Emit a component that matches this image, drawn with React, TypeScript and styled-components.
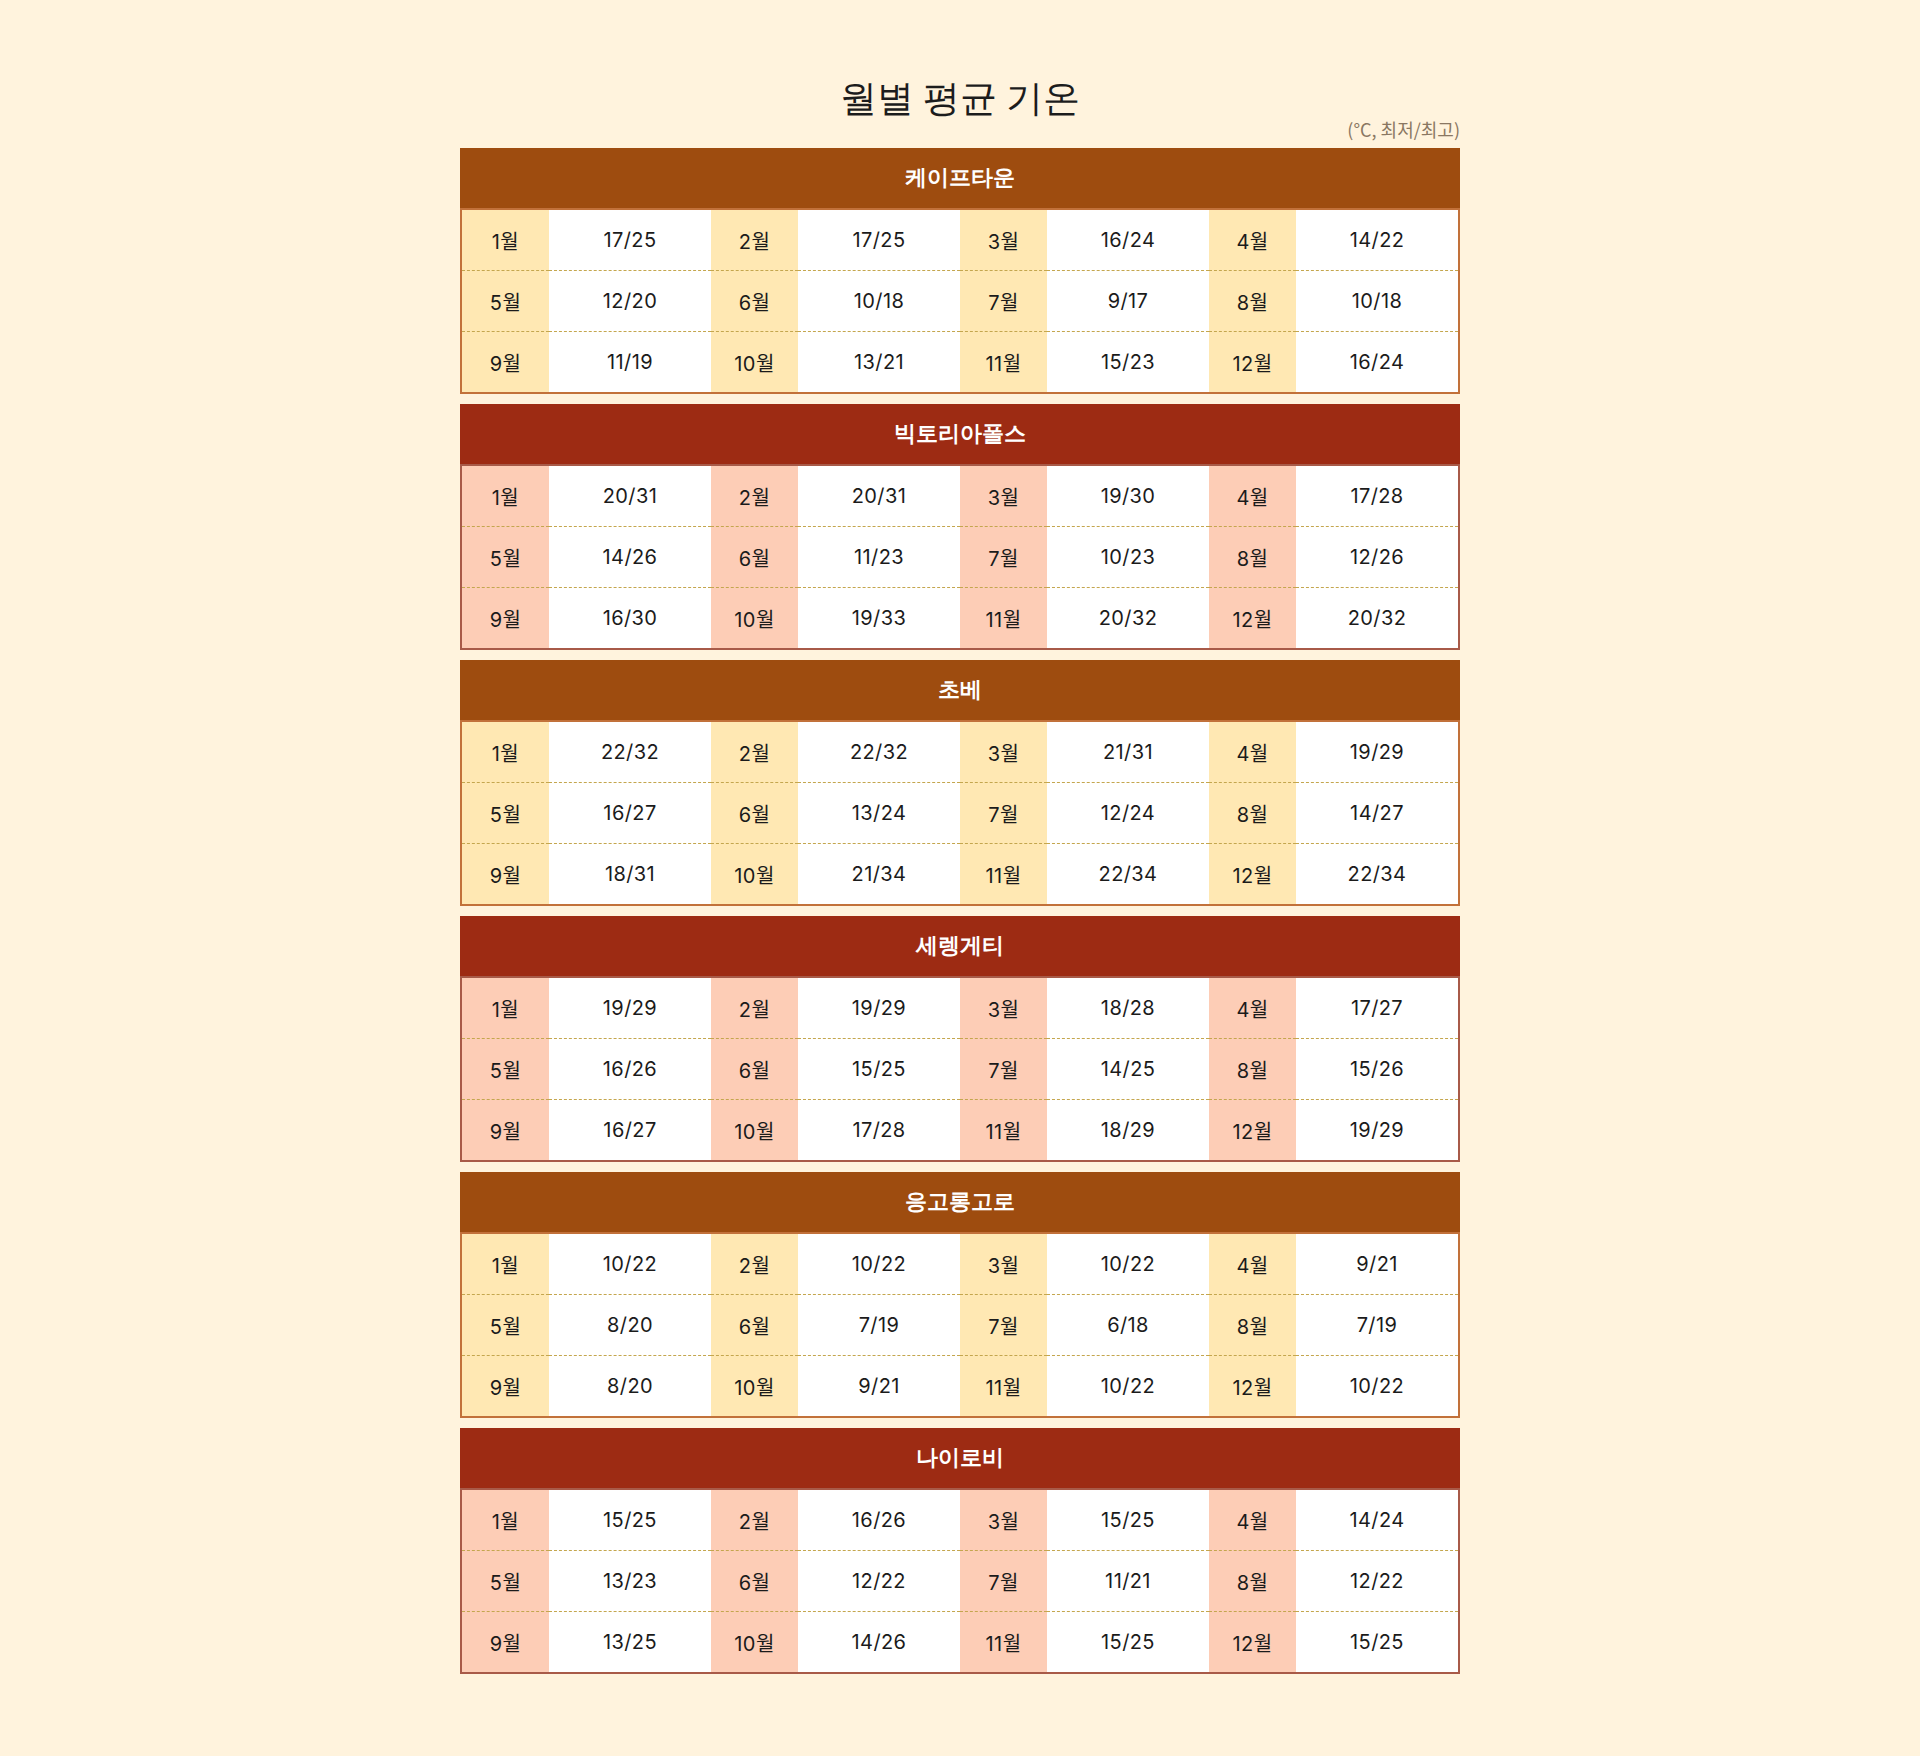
import React from "react";
import styled, { createGlobalStyle } from "styled-components";

const GlobalStyle = createGlobalStyle`
  html, body {
    margin: 0;
    padding: 0;
    background: #fff3dd;
  }
  * { box-sizing: border-box; }
`;

type Tone = "amber" | "rust";

const palette: Record<Tone, { head: string; border: string; label: string }> = {
  amber: { head: "#9e4c0f", border: "#c2713a", label: "#ffe8b3" },
  rust: { head: "#9d2b13", border: "#a85a48", label: "#fdcdb6" },
};

const Page = styled.main`
  width: 1000px;
  margin: 0 auto;
  padding: 80px 0 82px;
  display: flex;
  flex-direction: column;
`;

const Title = styled.h1`
  margin: 0;
  text-align: center;
  font-family: serif;
  font-size: 37px;
  line-height: 37px;
  font-weight: 400;
  color: #1c1c1c;
`;

const Unit = styled.div`
  margin-top: 2px;
  text-align: right;
  font-family: "Noto Sans CJK KR", sans-serif;
  font-size: 18px;
  line-height: 21px;
  color: #8a7762;
`;

const Tables = styled.div`
  margin-top: 8px;
  display: flex;
  flex-direction: column;
  gap: 10px;
`;

const Card = styled.section``;

const Header = styled.h2<{ $tone: Tone }>`
  margin: 0;
  height: 60px;
  display: flex;
  align-items: center;
  justify-content: center;
  background: ${(p) => palette[p.$tone].head};
  color: #ffffff;
  font-family: serif;
  font-size: 22px;
  font-weight: 600;
`;

const Body = styled.div<{ $tone: Tone }>`
  border: 2px solid ${(p) => palette[p.$tone].border};
  background: #ffffff;
`;

const Row = styled.div`
  display: grid;
  grid-template-columns: repeat(4, 87fr 162fr);
`;

const Cell = styled.div<{ $tone: Tone; $label?: boolean; $dashed?: boolean }>`
  height: ${(p) => (p.$dashed ? 61 : 60)}px;
  display: flex;
  align-items: center;
  justify-content: center;
  background: ${(p) => (p.$label ? palette[p.$tone].label : "#ffffff")};
  border-top: ${(p) => (p.$dashed ? "1px dashed #c4a64e" : "none")};
  font-family: Inter, "Noto Sans CJK KR", sans-serif;
  font-size: 20px;
  letter-spacing: 0.4px;
  color: #1b1b1b;
`;

type City = { name: string; tone: Tone; temps: string[] };

const cities: City[] = [
  {
    name: "케이프타운",
    tone: "amber",
    temps: ["17/25", "17/25", "16/24", "14/22", "12/20", "10/18", "9/17", "10/18", "11/19", "13/21", "15/23", "16/24"],
  },
  {
    name: "빅토리아폴스",
    tone: "rust",
    temps: ["20/31", "20/31", "19/30", "17/28", "14/26", "11/23", "10/23", "12/26", "16/30", "19/33", "20/32", "20/32"],
  },
  {
    name: "초베",
    tone: "amber",
    temps: ["22/32", "22/32", "21/31", "19/29", "16/27", "13/24", "12/24", "14/27", "18/31", "21/34", "22/34", "22/34"],
  },
  {
    name: "세렝게티",
    tone: "rust",
    temps: ["19/29", "19/29", "18/28", "17/27", "16/26", "15/25", "14/25", "15/26", "16/27", "17/28", "18/29", "19/29"],
  },
  {
    name: "응고롱고로",
    tone: "amber",
    temps: ["10/22", "10/22", "10/22", "9/21", "8/20", "7/19", "6/18", "7/19", "8/20", "9/21", "10/22", "10/22"],
  },
  {
    name: "나이로비",
    tone: "rust",
    temps: ["15/25", "16/26", "15/25", "14/24", "13/23", "12/22", "11/21", "12/22", "13/25", "14/26", "15/25", "15/25"],
  },
];

function CityTable({ city }: { city: City }) {
  const rows = [0, 1, 2];
  return (
    <Card>
      <Header $tone={city.tone}>{city.name}</Header>
      <Body $tone={city.tone}>
        {rows.map((r) => (
          <Row key={r}>
            {[0, 1, 2, 3].map((c) => {
              const m = r * 4 + c;
              return (
                <React.Fragment key={c}>
                  <Cell $tone={city.tone} $label $dashed={r > 0}>
                    {m + 1}월
                  </Cell>
                  <Cell $tone={city.tone} $dashed={r > 0}>
                    {city.temps[m]}
                  </Cell>
                </React.Fragment>
              );
            })}
          </Row>
        ))}
      </Body>
    </Card>
  );
}

export default function App() {
  return (
    <>
      <GlobalStyle />
      <Page>
        <Title>월별 평균 기온</Title>
        <Unit>(°C, 최저/최고)</Unit>
        <Tables>
          {cities.map((c) => (
            <CityTable key={c.name} city={c} />
          ))}
        </Tables>
      </Page>
    </>
  );
}
